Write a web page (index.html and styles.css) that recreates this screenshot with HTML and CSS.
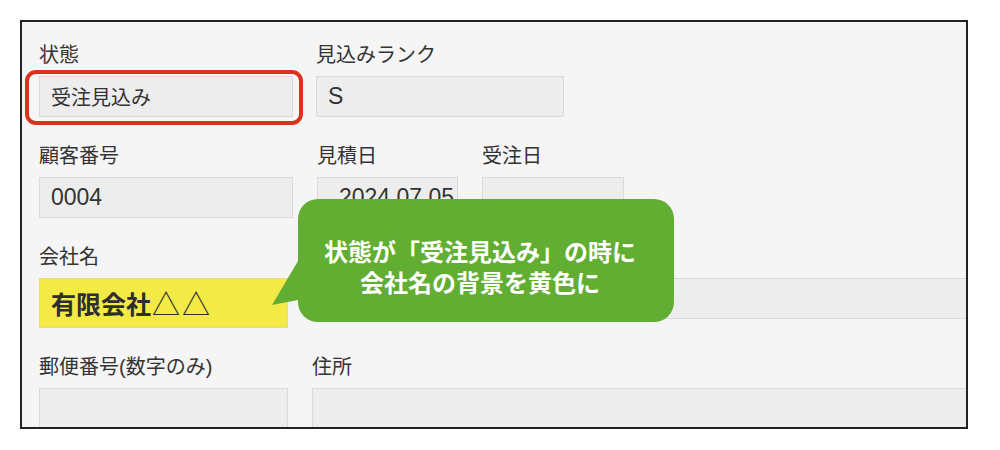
FILE: index.html
```html
<!DOCTYPE html>
<html lang="ja">
<head>
<meta charset="utf-8">
<title>フォーム</title>
<link rel="stylesheet" href="styles.css">
</head>
<body>
<div class="frame">
  <div class="row">
    <div class="field w254">
      <div class="label">状態</div>
      <div class="input-wrap">
        <div class="input">受注見込み</div>
        <div class="highlight"></div>
      </div>
    </div>
    <div class="field w248">
      <div class="label">見込みランク</div>
      <div class="input latin">S</div>
    </div>
  </div>
  <div class="row">
    <div class="field w254">
      <div class="label">顧客番号</div>
      <div class="input latin">0004</div>
    </div>
    <div class="field w141">
      <div class="label">見積日</div>
      <div class="input latin date">2024.07.05</div>
    </div>
    <div class="field w142">
      <div class="label">受注日</div>
      <div class="input"></div>
    </div>
  </div>
  <div class="row row-company">
    <div class="field w249">
      <div class="label">会社名</div>
      <div class="input yellow">有限会社<span class="tri">△△</span></div>
    </div>
    <div class="field wide">
      <div class="label">&nbsp;</div>
      <div class="input"></div>
    </div>
  </div>
  <div class="row">
    <div class="field w249">
      <div class="label">郵便番号(数字のみ)</div>
      <div class="input"></div>
    </div>
    <div class="field wide">
      <div class="label">住所</div>
      <div class="input"></div>
    </div>
  </div>
  <div class="callout"><div class="callout-line">状態が「受注見込み」の時に</div><div class="callout-line">会社名の背景を黄色に</div></div>
</div>
</body>
</html>
```

FILE: styles.css
```css
html, body {
  margin: 0;
  padding: 0;
  background: #ffffff;
}

body {
  font-family: "Liberation Sans", "Noto Sans CJK JP", sans-serif;
  color: #333333;
}

.frame {
  position: relative;
  box-sizing: border-box;
  margin: 20px 0 0 20px;
  width: 948px;
  height: 409px;
  border: 2px solid #222222;
  background: #f5f5f5;
  padding: 21px 0 0 17px;
  overflow: hidden;
}

.row {
  display: flex;
  gap: 24px;
  margin-bottom: 27px;
}

.row:first-child {
  gap: 23px;
}

.row-company {
  gap: 23px;
  margin-bottom: 27px;
}

.row:last-of-type {
  gap: 23px;
}

.field {
  display: flex;
  flex-direction: column;
  flex: none;
}

.w254 { width: 254px; }
.w248 { width: 248px; }
.w141 { width: 141px; }
.w142 { width: 142px; }
.w249 { width: 249px; }
.wide { width: 720px; }

.label {
  font-size: 20px;
  line-height: 24px;
  height: 24px;
  margin-bottom: 9px;
  color: #333333;
  white-space: nowrap;
}

.input-wrap {
  position: relative;
}

.input {
  box-sizing: border-box;
  height: 41px;
  background: #eeeded;
  border: 1px solid #dadada;
  padding: 0 11px;
  display: flex;
  align-items: center;
  font-size: 20px;
  color: #333333;
  white-space: nowrap;
  overflow: hidden;
}

.latin {
  font-family: "Liberation Sans", sans-serif;
  font-size: 23px;
}

.date {
  padding-left: 21px;
}

.yellow {
  height: 50px;
  background: #f4ea46;
  border-color: #e3dc8a;
  font-family: "Noto Sans CJK JP", sans-serif;
  font-size: 25px;
  font-weight: bold;
  color: #2e2e2e;
}

.tri {
  font-weight: normal;
  font-size: 28px;
  line-height: 1;
  letter-spacing: 2px;
  margin-left: 1px;
}

.highlight {
  position: absolute;
  left: -14px;
  top: -6px;
  width: 278px;
  height: 55px;
  box-sizing: border-box;
  border: 4px solid #d9311e;
  border-radius: 11px;
}

.callout {
  position: absolute;
  left: 276px;
  top: 177px;
  width: 376px;
  height: 123px;
  box-sizing: border-box;
  background: #62ae33;
  border-radius: 20px;
  color: #ffffff;
  font-family: "Noto Sans CJK JP", sans-serif;
  font-weight: bold;
  font-size: 24px;
  text-align: center;
  padding: 36px 12px 0 0;
}

.callout-line {
  height: 31px;
  line-height: 31px;
  white-space: nowrap;
}

.callout::before {
  content: "";
  position: absolute;
  left: -26px;
  top: 60px;
  width: 44px;
  height: 46px;
  background: #62ae33;
  clip-path: polygon(0 46px, 26px 2px, 44px 2px, 44px 41px, 26px 41px);
}
```
